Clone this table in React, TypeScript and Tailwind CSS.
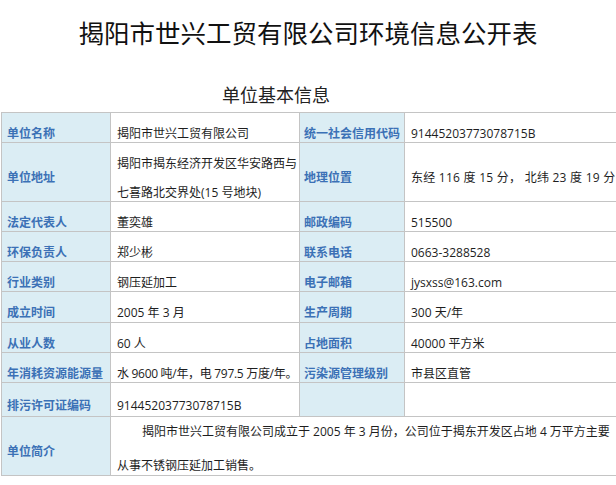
import React from "react";

type Row = { a: string; b: React.ReactNode; c: string; d: React.ReactNode };

const rows: Row[] = [
  { a: "单位名称", b: "揭阳市世兴工贸有限公司", c: "统一社会信用代码", d: "91445203773078715B" },
  {
    a: "单位地址",
    b: (
      <span className="block leading-[29px]">
        揭阳市揭东经济开发区华安路西与
        <br />
        七喜路北交界处(15 号地块)
      </span>
    ),
    c: "地理位置",
    d: <span className="tracking-[0.25px]">东经 116 度 15 分， 北纬 23 度 19 分</span>,
  },
  { a: "法定代表人", b: "董奕雄", c: "邮政编码", d: "515500" },
  { a: "环保负责人", b: "郑少彬", c: "联系电话", d: "0663-3288528" },
  { a: "行业类别", b: "钢压延加工", c: "电子邮箱", d: "jysxss@163.com" },
  { a: "成立时间", b: "2005 年 3 月", c: "生产周期", d: "300 天/年" },
  { a: "从业人数", b: "60 人", c: "占地面积", d: "40000 平方米" },
  {
    a: "年消耗资源能源量",
    b: <span className="tracking-[-0.3px]">水 9600 吨/年，电 797.5 万度/年。</span>,
    c: "污染源管理级别",
    d: "市县区直管",
  },
  { a: "排污许可证编码", b: "91445203773078715B", c: "", d: "" },
];

const cellBase =
  "border-r border-b border-[#c4c4c4] flex items-center pt-[12px] text-[12px] leading-[18px] whitespace-nowrap overflow-hidden";
const labelCls = `${cellBase} bg-[#dbedf4] text-[#3b71b6] font-bold pl-[5px]`;
const valueCls = `${cellBase} bg-white text-[#1e1e1e] pl-[6px]`;
const label3Cls = `${cellBase} bg-[#dbedf4] text-[#3b71b6] font-bold pl-[4px]`;

export default function App() {
  return (
    <div className="w-[616px] h-[485px] overflow-hidden bg-white font-['Open_Sans','Noto_Sans_CJK_SC',sans-serif]">
      <h1 className="text-center text-[25.5px] leading-[30px] pt-[17px] text-[#111] font-normal font-['Noto_Sans_CJK_SC',sans-serif] whitespace-nowrap">
        揭阳市世兴工贸有限公司环境信息公开表
      </h1>
      <div className="mt-[35px] pl-[222px] text-[18px] leading-[24px] text-[#222] font-['Noto_Sans_CJK_SC',sans-serif]">
        单位基本信息
      </div>
      <div className="mt-[6px] ml-px w-max grid grid-cols-[109px_189px_105px_290px] grid-rows-[30px_59px_30px_30px_30px_31px_30px_30px_34px_59px] border-l border-t border-[#c4c4c4]">
        {rows.map((r, i) => (
          <React.Fragment key={i}>
            <div className={labelCls}>{r.a}</div>
            <div className={valueCls}>{r.b}</div>
            <div className={label3Cls}>{r.c}</div>
            <div className={valueCls}>{r.d}</div>
          </React.Fragment>
        ))}
        <div className={labelCls}>单位简介</div>
        <div className="col-span-3 border-r border-b border-[#c4c4c4] flex items-center pt-[6px] pl-[6px] text-[12px] text-[#1e1e1e] whitespace-nowrap overflow-hidden">
          <span className="block leading-[34px]">
            <span className="pl-[25px]">
              揭阳市世兴工贸有限公司成立于 2005 年 3 月份，公司位于揭东开发区占地 4 万平方主要
            </span>
            <br />
            从事不锈钢压延加工销售。
          </span>
        </div>
      </div>
    </div>
  );
}
